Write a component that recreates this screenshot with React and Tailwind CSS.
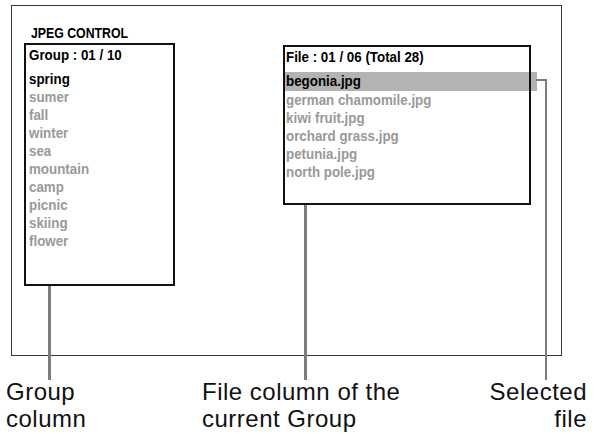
import React from 'react';

const groups = ['spring', 'sumer', 'fall', 'winter', 'sea', 'mountain', 'camp', 'picnic', 'skiing', 'flower'];
const files = ['begonia.jpg', 'german chamomile.jpg', 'kiwi fruit.jpg', 'orchard grass.jpg', 'petunia.jpg', 'north pole.jpg'];

const sans = { fontFamily: '"Liberation Sans", Arial, sans-serif' };

// condensed look for the on-screen text
function Cond({ children, wide }) {
  return (
    <span className={`inline-block origin-left whitespace-nowrap ${wide ? 'scale-x-[0.82]' : 'scale-x-[0.89]'}`}>
      {children}
    </span>
  );
}

export default function App() {
  return (
    <div className="relative flex h-[434px] w-[605px] flex-col bg-white" style={sans}>
      {/* screen frame */}
      <div className="ml-[11px] mt-[5px] h-[351px] w-[551px] border border-[#3a3a3a] px-[12px] text-[15px] font-bold leading-[18px]">
        <div className="pl-[7px] pt-[18px] text-black">
          <Cond wide>JPEG CONTROL</Cond>
        </div>

        <div className="mt-[1px] flex items-start">
          {/* group column */}
          <div className="h-[243px] w-[151px] px-[5px] pt-[3px] outline-2 -outline-offset-2 outline-[#111]">
            <div className="h-[18px] text-black">
              <Cond>Group : 01 / 10</Cond>
            </div>
            <ul className="mt-[6px]">
              {groups.map((g, i) => (
                <li key={g} className={`h-[18px] ${i === 0 ? 'text-black' : 'text-[#999999]'}`}>
                  <Cond>{g}</Cond>
                </li>
              ))}
            </ul>
          </div>

          {/* file column */}
          <div className="ml-[108px] mt-[2px] h-[160px] w-[248px] pt-[3px] outline-2 -outline-offset-2 outline-[#111]">
            <div className="h-[18px] pl-[3px] text-black">
              <Cond>File : 01 / 06 (Total 28)</Cond>
            </div>
            <ul className="mt-[6px]">
              {files.map((f, i) => (
                <li
                  key={f}
                  className={`pl-[3px] ${i === 0 ? 'mr-[-6px] h-[19px] bg-[#b3b3b3] text-black' : 'h-[18px] text-[#999999]'}`}
                >
                  <Cond>{f}</Cond>
                </li>
              ))}
            </ul>
          </div>
        </div>
      </div>

      {/* labels */}
      <div className="mt-[22px] flex text-[24px] leading-[27px] tracking-[0.5px] text-[#111]">
        <div className="w-[202px] pl-[6px]">
          Group
          <br />
          column
        </div>
        <div className="flex-1">
          File column of the
          <br />
          current Group
        </div>
        <div className="pr-[18px] text-right">
          Selected
          <br />
          file
        </div>
      </div>

      {/* callout lines */}
      <div className="absolute left-[48px] top-[286px] h-[94px] w-[3px] bg-[#7d7d7d]" />
      <div className="absolute left-[304px] top-[205px] h-[175px] w-[3px] bg-[#7d7d7d]" />
      <div className="absolute left-[536px] top-[79px] h-[2px] w-[11px] bg-[#7d7d7d]" />
      <div className="absolute left-[545px] top-[79px] h-[301px] w-[2px] bg-[#7d7d7d]" />
    </div>
  );
}
